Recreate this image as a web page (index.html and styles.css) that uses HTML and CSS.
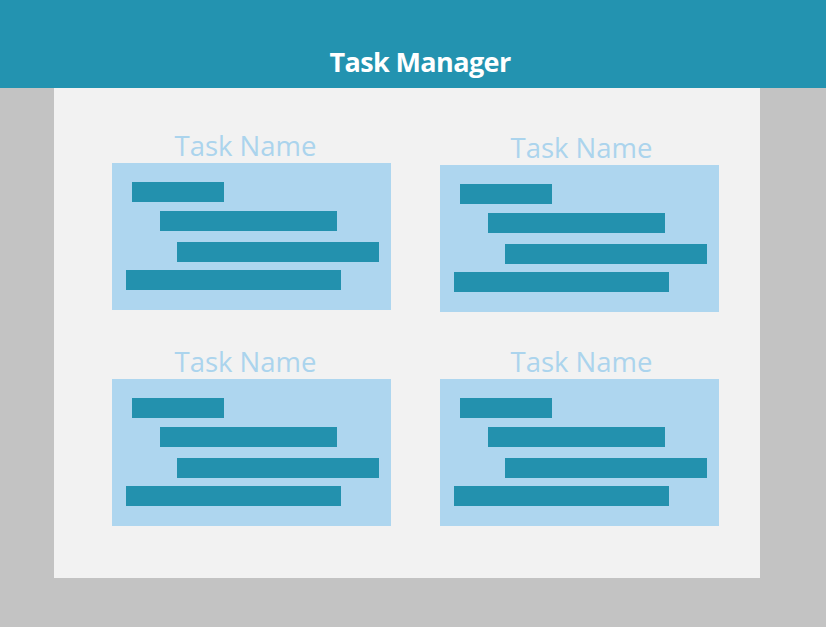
FILE: index.html
```html
<!DOCTYPE html>
<html>
<head>
<meta charset="utf-8">
<title>Task Manager</title>
<link rel="stylesheet" href="styles.css">
</head>
<body>
<header class="app-header">
  <h1 class="app-title">Task Manager</h1>
</header>
<div class="stage">
  <main class="panel">
    <section class="task task-left">
      <h2 class="task-name">Task Name</h2>
      <div class="task-card">
        <div class="bar bar-1"></div>
        <div class="bar bar-2"></div>
        <div class="bar bar-3"></div>
        <div class="bar bar-4"></div>
      </div>
    </section>
    <section class="task task-right task-shift">
      <h2 class="task-name">Task Name</h2>
      <div class="task-card">
        <div class="bar bar-1"></div>
        <div class="bar bar-2"></div>
        <div class="bar bar-3"></div>
        <div class="bar bar-4"></div>
      </div>
    </section>
    <section class="task task-left">
      <h2 class="task-name">Task Name</h2>
      <div class="task-card">
        <div class="bar bar-1"></div>
        <div class="bar bar-2"></div>
        <div class="bar bar-3"></div>
        <div class="bar bar-4"></div>
      </div>
    </section>
    <section class="task task-right">
      <h2 class="task-name">Task Name</h2>
      <div class="task-card">
        <div class="bar bar-1"></div>
        <div class="bar bar-2"></div>
        <div class="bar bar-3"></div>
        <div class="bar bar-4"></div>
      </div>
    </section>
  </main>
</div>
</body>
</html>
```

FILE: styles.css
```css
html, body {
  margin: 0;
  padding: 0;
}

body {
  width: 826px;
  height: 627px;
  background: #c3c3c3;
  font-family: "Open Sans", "Noto Sans", sans-serif;
  overflow: hidden;
}

.app-header {
  box-sizing: border-box;
  height: 88px;
  background: #2393b0;
  padding: 48px 0 0 14px;
  text-align: center;
}

.app-title {
  margin: 0;
  font-size: 27px;
  line-height: 27px;
  font-weight: 700;
  color: #ffffff;
  letter-spacing: -0.6px;
}

.stage {
  padding-left: 54px;
}

.panel {
  box-sizing: border-box;
  width: 706px;
  height: 490px;
  background: #f2f2f2;
  padding: 43px 0 0 58px;
  display: grid;
  grid-template-columns: 279px 279px;
  grid-auto-rows: max-content;
  column-gap: 49px;
  row-gap: 35px;
}

.task {
  display: flex;
  flex-direction: column;
  align-items: center;
}

.task-shift {
  padding-top: 2px;
}

.task-name {
  margin: 0 0 2px 0;
  font-size: 27.5px;
  line-height: 30px;
  font-weight: 400;
  color: #abd4ed;
}

.task-left .task-name {
  margin-right: 12px;
}

.task-right .task-name {
  margin-left: 4px;
}

.task-card {
  box-sizing: border-box;
  width: 279px;
  height: 147px;
  background: #aed6ef;
  padding-top: 19px;
  display: flex;
  flex-direction: column;
  align-items: flex-start;
}

.bar {
  height: 20px;
  background: #2391ae;
}

.bar-1 {
  width: 92px;
  margin-left: 20px;
}

.bar-2 {
  width: 177px;
  margin-left: 48px;
  margin-top: 9px;
}

.bar-3 {
  width: 202px;
  margin-left: 65px;
  margin-top: 11px;
}

.bar-4 {
  width: 215px;
  margin-left: 14px;
  margin-top: 8px;
}
```
